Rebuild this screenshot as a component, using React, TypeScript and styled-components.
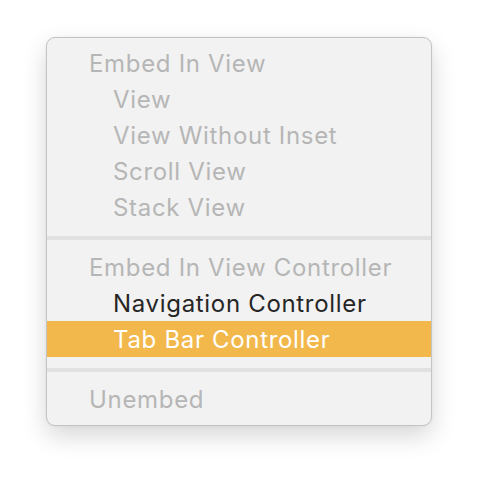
import { createGlobalStyle } from 'styled-components';
import styled from 'styled-components';

const GlobalStyle = createGlobalStyle`
  html, body {
    margin: 0;
    padding: 0;
    background: #ffffff;
  }
  body {
    font-family: Inter, "Liberation Sans", sans-serif;
  }
`;

const Page = styled.div`
  width: 478px;
  height: 480px;
  padding: 37px 0 0 46px;
  box-sizing: border-box;
`;

const Menu = styled.div`
  width: 386px;
  box-sizing: border-box;
  background: #f2f2f2;
  border: 1px solid #c4c4c4;
  border-radius: 9px;
  padding: 7px 0 8px;
  box-shadow: 0 10px 24px rgba(0, 0, 0, 0.16), 0 0 2px rgba(0, 0, 0, 0.08);
  overflow: hidden;
`;

const Item = styled.div<{ $indent?: boolean; $disabled?: boolean; $selected?: boolean }>`
  height: 36px;
  display: flex;
  align-items: center;
  padding-left: ${(p) => (p.$indent ? 66 : 42)}px;
  font-size: 24px;
  letter-spacing: 0.68px;
  color: ${(p) => (p.$selected ? '#ffffff' : p.$disabled ? '#b6b6b6' : '#262626')};
  background: ${(p) => (p.$selected ? '#f2b84b' : 'transparent')};
  white-space: nowrap;
`;

const Separator = styled.div`
  height: 4px;
  margin: 11px 0 9px;
  background: #e1e1e1;
`;

type Entry =
  | { kind: 'item'; label: string; indent?: boolean; disabled?: boolean; selected?: boolean }
  | { kind: 'sep' };

const entries: Entry[] = [
  { kind: 'item', label: 'Embed In View', disabled: true },
  { kind: 'item', label: 'View', indent: true, disabled: true },
  { kind: 'item', label: 'View Without Inset', indent: true, disabled: true },
  { kind: 'item', label: 'Scroll View', indent: true, disabled: true },
  { kind: 'item', label: 'Stack View', indent: true, disabled: true },
  { kind: 'sep' },
  { kind: 'item', label: 'Embed In View Controller', disabled: true },
  { kind: 'item', label: 'Navigation Controller', indent: true },
  { kind: 'item', label: 'Tab Bar Controller', indent: true, selected: true },
  { kind: 'sep' },
  { kind: 'item', label: 'Unembed', disabled: true },
];

const App = () => (
  <>
    <GlobalStyle />
    <Page>
      <Menu>
        {entries.map((e, i) =>
          e.kind === 'sep' ? (
            <Separator key={i} />
          ) : (
            <Item key={i} $indent={e.indent} $disabled={e.disabled} $selected={e.selected}>
              {e.label}
            </Item>
          )
        )}
      </Menu>
    </Page>
  </>
);

export default App;
